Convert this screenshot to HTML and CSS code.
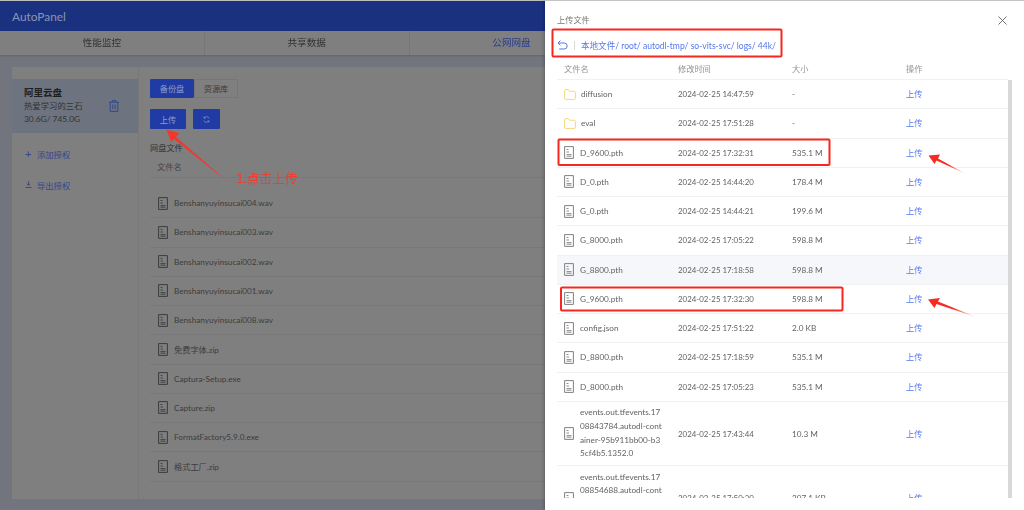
FILE: index.html
```html
<!DOCTYPE html>
<html lang="zh">
<head>
<meta charset="utf-8">
<title>AutoPanel</title>
<link rel="stylesheet" href="styles.css">
</head>
<body>
<svg width="0" height="0" class="defs">
  <symbol id="file" viewBox="0 0 10 13"><path d="M.6.6h8.8v11.8H.6z" fill="none" stroke="currentColor" stroke-width="1"/><path d="M2.5 3.5h2M2.5 6h2.5M2.5 8.6h5M2.5 10.2h5" fill="none" stroke="currentColor" stroke-width=".9"/></symbol>
  <symbol id="folder" viewBox="0 0 12 11"><path d="M.6 1.8q0-1.2 1.2-1.2h2.6l1.2 1.6h4.6q1.2 0 1.2 1.2v5.8q0 1.2-1.2 1.2H1.8q-1.2 0-1.2-1.2z" fill="none" stroke="#f7d675" stroke-width="1"/></symbol>
</svg>
<div class="page">
  <header class="topbar">AutoPanel</header>
  <nav class="navtabs">
    <div class="navtab">性能监控</div>
    <div class="navtab">共享数据</div>
    <div class="navtab navtab-active">公网网盘</div>
    <div class="navtab"></div>
    <div class="navtab"></div>
  </nav>
  <main class="main">
    <section class="card">
      <aside class="side">
        <div class="account">
          <div class="acc-info">
            <div class="acc-name">阿里云盘</div>
            <div class="acc-line">热爱学习的三石</div>
            <div class="acc-line">30.6G/ 745.0G</div>
          </div>
          <svg class="trash" viewBox="0 0 10 12" width="10" height="12"><path d="M0 2.2h10M3.2 2V.6h3.6V2M1.2 2.4v9h7.6v-9M3.8 4.500v4.600M6.200 4.500v4.600" fill="none" stroke="currentColor" stroke-width="1"/></svg>
        </div>
        <div class="side-link side-link-first"><span class="side-ico">+</span>添加授权</div>
        <div class="side-link"><svg class="side-svg" viewBox="0 0 8 8" width="7" height="7"><path d="M4 0v4.500M2 3l2 2 2-2M.5 7.400h7" fill="none" stroke="currentColor" stroke-width="1"/></svg>导出授权</div>
      </aside>
      <div class="content">
        <div class="seg">
          <div class="seg-btn seg-on">备份盘</div>
          <div class="seg-btn">资源库</div>
        </div>
        <div class="actions">
          <div class="btn btn-up">上传</div>
          <div class="btn btn-ref"><svg viewBox="0 0 10 10" width="7" height="7"><path d="M8.800 3.400A4 4 0 0 0 1.600 3M1.200 6.600A4 4 0 0 0 8.400 7M1.400.8V3h2.200M8.600 9.200V7H6.400" fill="none" stroke="currentColor" stroke-width="1"/></svg></div>
        </div>
        <div class="disk-title">网盘文件</div>
        <div class="disk-head">文件名</div>
        <div class="disk-rows">
          <div class="disk-row"><svg class="ico"><use href="#file"/></svg>Benshanyuyinsucai004.wav</div>
          <div class="disk-row"><svg class="ico"><use href="#file"/></svg>Benshanyuyinsucai003.wav</div>
          <div class="disk-row"><svg class="ico"><use href="#file"/></svg>Benshanyuyinsucai002.wav</div>
          <div class="disk-row"><svg class="ico"><use href="#file"/></svg>Benshanyuyinsucai001.wav</div>
          <div class="disk-row"><svg class="ico"><use href="#file"/></svg>Benshanyuyinsucai008.wav</div>
          <div class="disk-row"><svg class="ico"><use href="#file"/></svg>免费字体.zip</div>
          <div class="disk-row"><svg class="ico"><use href="#file"/></svg>Captura-Setup.exe</div>
          <div class="disk-row"><svg class="ico"><use href="#file"/></svg>Capture.zip</div>
          <div class="disk-row"><svg class="ico"><use href="#file"/></svg>FormatFactory5.9.0.exe</div>
          <div class="disk-row"><svg class="ico"><use href="#file"/></svg>格式工厂.zip</div>
        </div>
      </div>
    </section>
  </main>
</div>

<aside class="drawer">
  <div class="drawer-head">
    <span>上传文件</span>
    <svg class="close" viewBox="0 0 9 9" width="9" height="9"><path d="M.5.5l8 8M8.500.5l-8 8" fill="none" stroke="currentColor" stroke-width=".9"/></svg>
  </div>
  <div class="crumb">
    <svg class="back" viewBox="0 0 11 10" width="11" height="10"><path d="M3.400.6L1 3l2.400 2.400M1 3h6.200a3 3 0 0 1 0 6H2.200" fill="none" stroke="currentColor" stroke-width="1"/></svg>
    <span class="crumb-sep"></span>
    <span>本地文件/ root/ autodl-tmp/ so-vits-svc/ logs/ 44k/</span>
  </div>
  <div class="grid-row grid-head"><div class="c-name">文件名</div><div>修改时间</div><div>大小</div><div>操作</div></div>
  <div class="scroll">
    <div class="grid-row"><div class="c-name"><svg class="ico-f"><use href="#folder"/></svg>diffusion</div><div class="c-time">2024-02-25 14:47:59</div><div>-</div><a class="up">上传</a></div>
    <div class="grid-row"><div class="c-name"><svg class="ico-f"><use href="#folder"/></svg>eval</div><div class="c-time">2024-02-25 17:51:28</div><div>-</div><a class="up">上传</a></div>
    <div class="grid-row"><div class="c-name"><svg class="ico"><use href="#file"/></svg>D_9600.pth</div><div class="c-time">2024-02-25 17:32:31</div><div>535.1 M</div><a class="up">上传</a></div>
    <div class="grid-row"><div class="c-name"><svg class="ico"><use href="#file"/></svg>D_0.pth</div><div class="c-time">2024-02-25 14:44:20</div><div>178.4 M</div><a class="up">上传</a></div>
    <div class="grid-row"><div class="c-name"><svg class="ico"><use href="#file"/></svg>G_0.pth</div><div class="c-time">2024-02-25 14:44:21</div><div>199.6 M</div><a class="up">上传</a></div>
    <div class="grid-row"><div class="c-name"><svg class="ico"><use href="#file"/></svg>G_8000.pth</div><div class="c-time">2024-02-25 17:05:22</div><div>598.8 M</div><a class="up">上传</a></div>
    <div class="grid-row row-hover"><div class="c-name"><svg class="ico"><use href="#file"/></svg>G_8800.pth</div><div class="c-time">2024-02-25 17:18:58</div><div>598.8 M</div><a class="up">上传</a></div>
    <div class="grid-row"><div class="c-name"><svg class="ico"><use href="#file"/></svg>G_9600.pth</div><div class="c-time">2024-02-25 17:32:30</div><div>598.8 M</div><a class="up">上传</a></div>
    <div class="grid-row"><div class="c-name"><svg class="ico"><use href="#file"/></svg>config.json</div><div class="c-time">2024-02-25 17:51:22</div><div>2.0 KB</div><a class="up">上传</a></div>
    <div class="grid-row"><div class="c-name"><svg class="ico"><use href="#file"/></svg>D_8800.pth</div><div class="c-time">2024-02-25 17:18:59</div><div>535.1 M</div><a class="up">上传</a></div>
    <div class="grid-row"><div class="c-name"><svg class="ico"><use href="#file"/></svg>D_8000.pth</div><div class="c-time">2024-02-25 17:05:23</div><div>535.1 M</div><a class="up">上传</a></div>
    <div class="grid-row row-tall"><div class="c-name"><svg class="ico"><use href="#file"/></svg><span class="wrap">events.out.tfevents.17<br>08843784.autodl-cont<br>ainer-95b911bb00-b3<br>5cf4b5.1352.0</span></div><div class="c-time">2024-02-25 17:43:44</div><div>10.3 M</div><a class="up">上传</a></div>
    <div class="grid-row row-tall"><div class="c-name"><svg class="ico"><use href="#file"/></svg><span class="wrap">events.out.tfevents.17<br>08854688.autodl-cont<br>ainer-95b911bb00-b3<br>5cf4b5.1352.0</span></div><div class="c-time">2024-02-25 17:50:30</div><div>207.1 KB</div><a class="up">上传</a></div>
    <div class="scrollbar"></div>
  </div>
</aside>

<svg class="notes" viewBox="0 0 1024 510" width="1024" height="510">
  <defs>
    <linearGradient id="g1" gradientUnits="userSpaceOnUse" x1="232" y1="185" x2="167" y2="130"><stop offset="0" stop-color="#ff3b30" stop-opacity=".4"/><stop offset=".3" stop-color="#f0382c"/></linearGradient>
    <linearGradient id="g2" gradientUnits="userSpaceOnUse" x1="966" y1="174" x2="930" y2="155"><stop offset="0" stop-color="#ff3b30" stop-opacity=".15"/><stop offset=".5" stop-color="#f52a20"/></linearGradient>
    <linearGradient id="g3" gradientUnits="userSpaceOnUse" x1="976" y1="317" x2="928" y2="300"><stop offset="0" stop-color="#ff3b30" stop-opacity=".15"/><stop offset=".5" stop-color="#f52a20"/></linearGradient>
  </defs>
  <g class="box">
    <rect x="552.500" y="29.500" width="229" height="27" rx="1"/>
    <rect x="558.500" y="139.500" width="271" height="25.500" rx="1"/>
    <rect x="561" y="287.500" width="281.500" height="23" rx="1"/>
  </g>
  <path d="M232 185.500L176 137L179.500 133L166.500 129.500L171 142L174 139z" fill="url(#g1)"/>
  <path d="M966 174L938 158.500L940 154.500L928.500 155.500L934.500 164L936.500 160.500z" fill="url(#g2)"/>
  <path d="M976 317L938 301.500L940 298L928 299.500L934.500 308L936.500 304z" fill="url(#g3)"/>
  <text class="note" x="236" y="183">1.点击上传</text>
</svg>
</body>
</html>
```

FILE: styles.css
```css
* { box-sizing: border-box; }
html, body { margin: 0; padding: 0; height: 510px; overflow: hidden; }
body {
  position: relative;
  width: 1024px;
  font-family: Lato, "Noto Sans CJK SC", sans-serif;
  font-size: 8.200px;
  color: #303030;
  background: #72757e;
  filter: blur(.35px);
}
.defs { position: absolute; }
.page { height: 510px; display: flex; flex-direction: column; border-top: 1px solid #bdbdbd; }

.topbar {
  height: 30px;
  flex: none;
  background: #1a3180;
  color: #8a94b4;
  font-size: 11.900px;
  line-height: 31px;
  padding-left: 12px;
}
.navtabs {
  height: 24px;
  flex: none;
  display: grid;
  grid-template-columns: repeat(5, 1fr);
  background: #7f7f7f;
  box-shadow: 0 1px 2px rgba(0,0,0,.15);
  position: relative;
}
.navtab {
  font-size: 9.600px;
  line-height: 24px;
  text-align: center;
  color: #333;
  border-right: 1px solid #767676;
}
.navtab-active { color: #2b3c8f; }

.main { flex: 1; padding: 12px 0 11px 12px; min-height: 0; }
.card { height: 100%; display: flex; background: #7f7f7f; }
.side { width: 127px; flex: none; padding-top: 12px; border-right: 1px solid #787878; }
.account {
  height: 54px;
  background: #6d7480;
  padding: 7px 12px;
  display: flex;
  justify-content: space-between;
  align-items: center;
  color: #303030;
}
.acc-name { font-size: 9.500px; font-weight: 700; line-height: 14px; color: #1f1f1f; }
.acc-line { font-size: 8.400px; line-height: 13.500px; color: #333; }
.trash { color: #33488f; margin: 0 7px 0 0; }
.side-link {
  display: flex;
  align-items: center;
  height: 31px;
  padding-left: 13px;
  color: #33458d;
  font-size: 8.300px;
}
.side-link-first { margin-top: 5px; }
.side-ico { width: 12px; font-size: 11px; }
.side-svg { margin-right: 5px; }

.content { flex: 1; padding: 12px 0 0 11px; min-width: 0; }
.seg { display: flex; }
.seg-btn {
  width: 44px;
  height: 19px;
  line-height: 18px;
  text-align: center;
  border: 1px solid #767676;
  color: #3a3a3a;
}
.seg-on { background: #203ca4; border-color: #203ca4; color: #8f9cc7; border-radius: 1px; }
.actions { display: flex; gap: 7px; margin-top: 11px; }
.btn {
  height: 20px;
  background: #203ca4;
  color: #8f9cc7;
  display: flex;
  align-items: center;
  justify-content: center;
  border-radius: 1px;
}
.btn-up { width: 36px; }
.btn-ref { width: 27px; }
.disk-title { margin-top: 12px; line-height: 14px; color: #333; }
.disk-head {
  height: 23px;
  padding-left: 7px;
  line-height: 24px;
  color: #454545;
  border-bottom: 1px solid #787878;
}
.disk-rows { padding-top: 11px; }
.disk-row {
  height: 29.250px;
  display: flex;
  align-items: center;
  padding-left: 8px;
  color: #3c3c3c;
  border-bottom: 1px solid #787878;
  white-space: nowrap;
}
.ico { width: 10px; height: 13px; margin-right: 6px; color: #3c3c3c; flex: none; }

.drawer {
  position: absolute;
  left: 545px;
  top: 0;
  width: 479px;
  height: 510px;
  background: #fff;
  border-top: 1px solid #c4c4c4;
  box-shadow: -1px 0 3px rgba(0,0,0,.25);
  color: #606266;
  display: flex;
  flex-direction: column;
}
.drawer-head {
  height: 30px;
  flex: none;
  padding: 13px 17px 0 12px;
  display: flex;
  justify-content: space-between;
  line-height: 13px;
  color: #777;
}
.close { color: #606266; margin-top: 2px; }
.crumb {
  height: 28px;
  flex: none;
  display: flex;
  align-items: center;
  padding-left: 12px;
  color: #5578ee;
  font-size: 8.550px;
}
.back { flex: none; }
.crumb-sep { width: 1px; height: 9px; background: #d8d8d8; margin: 0 6px 0 6px; }
.grid-row {
  display: grid;
  grid-template-columns: 121px 114px 114px 102px;
  align-items: center;
  height: 29.250px;
  border-bottom: 1px solid #f0f1f3;
  margin: 0 16px 0 12px;
  flex: none;
  white-space: nowrap;
}
.grid-head { height: 21px; color: #909399; padding-bottom: 2px; }
.c-name { display: flex; align-items: center; padding-left: 7px; }
.c-time { font-size: 7.900px; }
.scroll {
  flex: 1;
  min-height: 0;
  overflow: hidden;
  position: relative;
  margin-bottom: 12px;
}
.scrollbar {
  position: absolute;
  top: 0;
  right: 12px;
  width: 4px;
  height: 418px;
  background: #d8d8d8;
}
.row-hover { background: #f5f7fa; }
.row-tall { height: 64.600px; }
.wrap { line-height: 13.700px; display: block; }
.drawer .ico { color: #808080; }
.ico-f { width: 12px; height: 11px; margin-right: 5px; flex: none; }
.up { color: #5578ee; margin-bottom: 2px; }

.notes { position: absolute; left: 0; top: 0; pointer-events: none; }
.box rect { fill: none; stroke: #f5271f; stroke-width: 2; }
.note { fill: #f23c30; font-size: 12.800px; font-family: Lato, "Noto Sans CJK SC", sans-serif; }
```
